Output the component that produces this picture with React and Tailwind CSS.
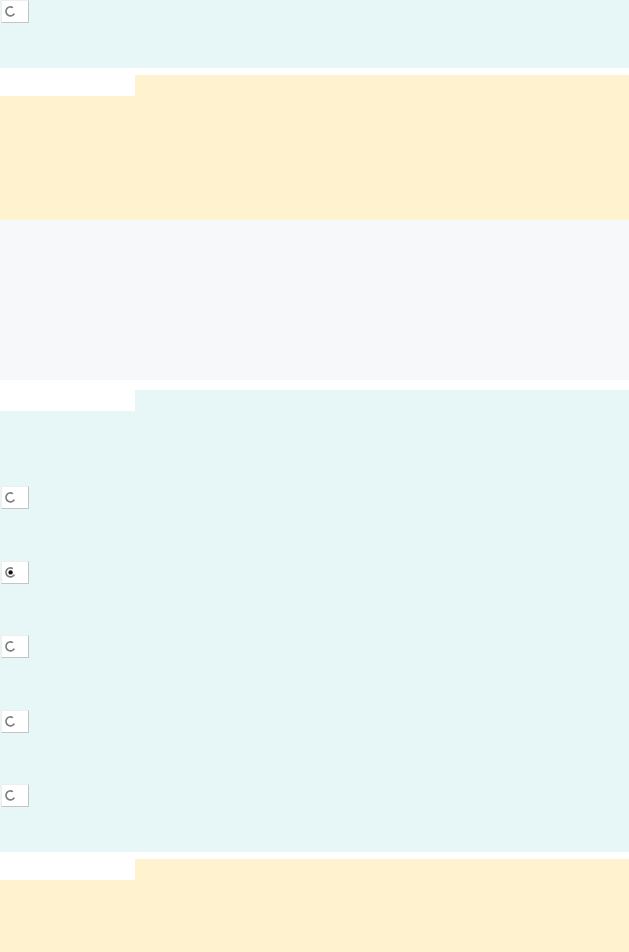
import React from 'react';

const Radio = ({ checked }) => (
    <div className="w-[28px] h-[23px] bg-white border-t border-l border-t-[#eeeeee] border-l-[#eeeeee] border-r border-b border-r-[#c4c4c4] border-b-[#c4c4c4] ml-px">
        <svg width="26" height="21" viewBox="0 0 26 21">
            <path d="M10.9 6.6 A4.5 4.5 0 1 0 12.4 12.6" fill="none" stroke="#7d7d7d" strokeWidth="1.6" />
            {checked && <circle cx="8.6" cy="10.4" r="2.2" fill="#111" />}
        </svg>
    </div>
);

const Tab = () => <div className="w-[135px] h-[21px] bg-white" />;

const App = () => {
    const options = [false, true, false, false, false];

    return (
        <div className="w-[629px] min-h-[952px] bg-white" style={{ fontFamily: 'Liberation Sans, sans-serif' }}>
            <section className="h-[68px] bg-[#e7f6f7]">
                <Radio />
            </section>

            <div className="h-[7px]" />

            <section className="h-[145px] bg-[#fff2cf]">
                <Tab />
            </section>

            <section className="h-[160px] bg-[#f6f8fa]" />

            <div className="h-[10px]" />

            <section className="h-[462px] bg-[#e7f6f7] flex flex-col">
                <Tab />
                <div className="flex flex-col gap-[51.5px] pt-[75px]">
                    {options.map((checked, i) => (
                        <Radio key={i} checked={checked} />
                    ))}
                </div>
            </section>

            <div className="h-[7px]" />

            <section className="h-[93px] bg-[#fff2cf]">
                <Tab />
            </section>
        </div>
    );
};

export default App;
